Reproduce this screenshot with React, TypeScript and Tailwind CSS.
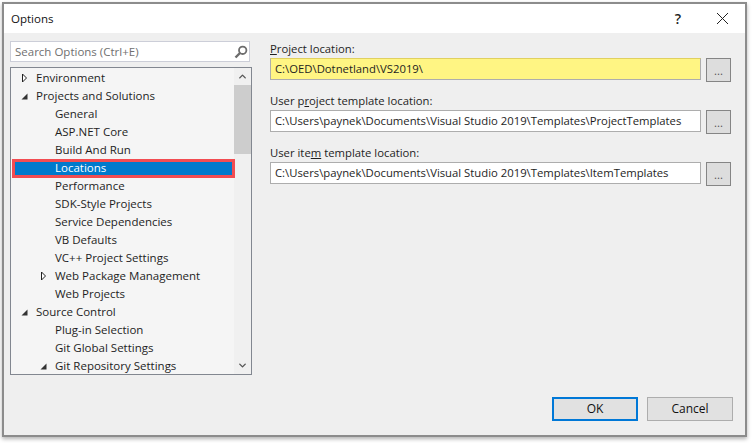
import { ChevronDown, ChevronUp } from 'lucide-react';
import type { ReactNode } from 'react';

const rows = [
  { label: 'Environment', depth: 0, arrow: 'open' },
  { label: 'Projects and Solutions', depth: 0, arrow: 'down' },
  { label: 'General', depth: 1 },
  { label: 'ASP.NET Core', depth: 1 },
  { label: 'Build And Run', depth: 1 },
  { label: 'Locations', depth: 1, selected: true },
  { label: 'Performance', depth: 1 },
  { label: 'SDK-Style Projects', depth: 1 },
  { label: 'Service Dependencies', depth: 1 },
  { label: 'VB Defaults', depth: 1 },
  { label: 'VC++ Project Settings', depth: 1 },
  { label: 'Web Package Management', depth: 1, arrow: 'open' },
  { label: 'Web Projects', depth: 1 },
  { label: 'Source Control', depth: 0, arrow: 'down' },
  { label: 'Plug-in Selection', depth: 1 },
  { label: 'Git Global Settings', depth: 1 },
  { label: 'Git Repository Settings', depth: 1, arrow: 'down' },
];

function Arrow({ kind }: { kind?: string }) {
  if (kind === 'open') {
    return (
      <svg width="7" height="10" viewBox="0 0 7 10" className="block">
        <path d="M1.5 1 L5.5 5 L1.5 9 Z" fill="#fff" stroke="#222" strokeWidth="1" />
      </svg>
    );
  }
  if (kind === 'down') {
    return (
      <svg width="7" height="7" viewBox="0 0 7 7" className="block">
        <path d="M0.5 6.5 H6.5 V0.5 Z" fill="#333" />
      </svg>
    );
  }
  return null;
}

function TreeRow({ label, depth, arrow, selected }: { label: string; depth: number; arrow?: string; selected?: boolean }) {
  return (
    <div className={selected ? 'relative h-[18px] flex items-center text-white' : 'h-[18px] flex items-center text-[#1e1e1e]'}>
      {/* selection is marked with a red box in the screenshot, it sticks out of the row a bit */}
      {selected && <div className="absolute left-[1px] top-0 w-[223px] h-[19px] border-[3px] border-[#f24d52] bg-[#007acc]" />}
      <div className={depth === 0 ? 'w-[25px] pl-[10px] flex justify-start' : 'w-[44px] pl-[29px] flex justify-start'}>
        <Arrow kind={arrow} />
      </div>
      <span className="relative">{label}</span>
    </div>
  );
}

function Field({ label, value, highlight }: { label: ReactNode; value: string; highlight?: boolean }) {
  return (
    <div>
      <div className="h-[18px] leading-[18px] text-[#1e1e1e]">{label}</div>
      <div className="flex gap-[5px] items-start">
        <div className={highlight ? 'w-[431px] h-[22px] border border-[#adadad] border-t-[#e0d060] bg-[#fff583] pl-[4px] leading-[20px] text-[#1e1e1e]' : 'w-[431px] h-[22px] border border-[#adadad] bg-white pl-[4px] leading-[20px] text-[#1e1e1e]'}>
          {value}
        </div>
        <div className="w-[25px] h-[24px] border border-[#858585] bg-[#dddddd] text-center leading-[24px] text-[#555]">...</div>
      </div>
    </div>
  );
}

export default function App() {
  return (
    <div className="w-[753px] h-[443px] bg-white pl-[2px] pt-[2px] font-['Open_Sans',sans-serif] text-[11.5px] overflow-hidden">
      <div className="w-[745px] h-[435px] border-2 border-[#8c8c8c] bg-[#efefef] flex flex-col shadow-[0_2px_4px_rgba(0,0,0,0.3)]">
        <div className="h-[29px] bg-white flex items-center pl-[7px] shrink-0 text-[#111]">
          <span className="text-[11.5px]">Options</span>
          <span className="ml-auto mr-[35px] text-[14px] leading-none font-semibold text-[#222]">?</span>
          <svg width="13" height="13" viewBox="0 0 13 13" className="mr-[16px]">
            <path d="M1 1 L12 12 M12 1 L1 12" stroke="#222" strokeWidth="1" />
          </svg>
        </div>
        <div className="flex flex-1 min-h-0 pl-[6px] pt-[8px]">
          <div className="w-[242px] shrink-0">
            <div className="w-[240px] h-[21px] border border-[#ccced8] bg-white flex items-center pl-[4px] pr-[1px] text-[#707070]">
              <span>Search Options (Ctrl+E)</span>
              <svg width="14" height="14" viewBox="0 0 14 14" className="ml-auto">
                <circle cx="8.7" cy="5.3" r="3.7" fill="none" stroke="#6d6d6d" strokeWidth="1.8" />
                <path d="M6 8 L1.5 12.5" stroke="#6d6d6d" strokeWidth="2.4" />
              </svg>
            </div>
            <div className="mt-[5px] w-[242px] h-[308px] border border-[#828790] bg-[#f5f5f5] flex overflow-hidden">
              <div className="w-[223px] pt-[1px]">
                {rows.map((row) => (
                  <TreeRow key={row.label} {...row} />
                ))}
              </div>
              <div className="w-[17px] ml-auto bg-[#f0f0f0] flex flex-col items-center">
                <div className="h-[17px] flex items-center justify-center">
                  <ChevronUp size={11} strokeWidth={3} color="#555" />
                </div>
                <div className="w-full h-[69px] bg-[#cdcdcd]" />
                <div className="mt-auto h-[17px] flex items-center justify-center">
                  <ChevronDown size={11} strokeWidth={3} color="#555" />
                </div>
              </div>
            </div>
          </div>
          <div className="flex-1 pl-[18px] pr-[12px] flex flex-col">
            <div className="flex flex-col gap-[10px] -mt-[1px] text-[11.3px]">
              <Field label={<><u>P</u>roject location:</>} value="C:\OED\Dotnetland\VS2019\" highlight />
              <Field label={<>User p<u>r</u>oject template location:</>} value="C:\Users\paynek\Documents\Visual Studio 2019\Templates\ProjectTemplates" />
              <Field label={<>User ite<u>m</u> template location:</>} value="C:\Users\paynek\Documents\Visual Studio 2019\Templates\ItemTemplates" />
            </div>
            <div className="mt-auto mb-[14px] flex justify-end gap-[9px] text-[12px]">
              <div className="w-[86px] h-[24px] border-2 border-[#0078d7] bg-[#e1e1e1] text-center leading-[20px] text-[#111]">OK</div>
              <div className="w-[86px] h-[24px] border border-[#adadad] bg-[#e1e1e1] text-center leading-[22px] text-[#111]">Cancel</div>
            </div>
          </div>
        </div>
      </div>
    </div>
  );
}
